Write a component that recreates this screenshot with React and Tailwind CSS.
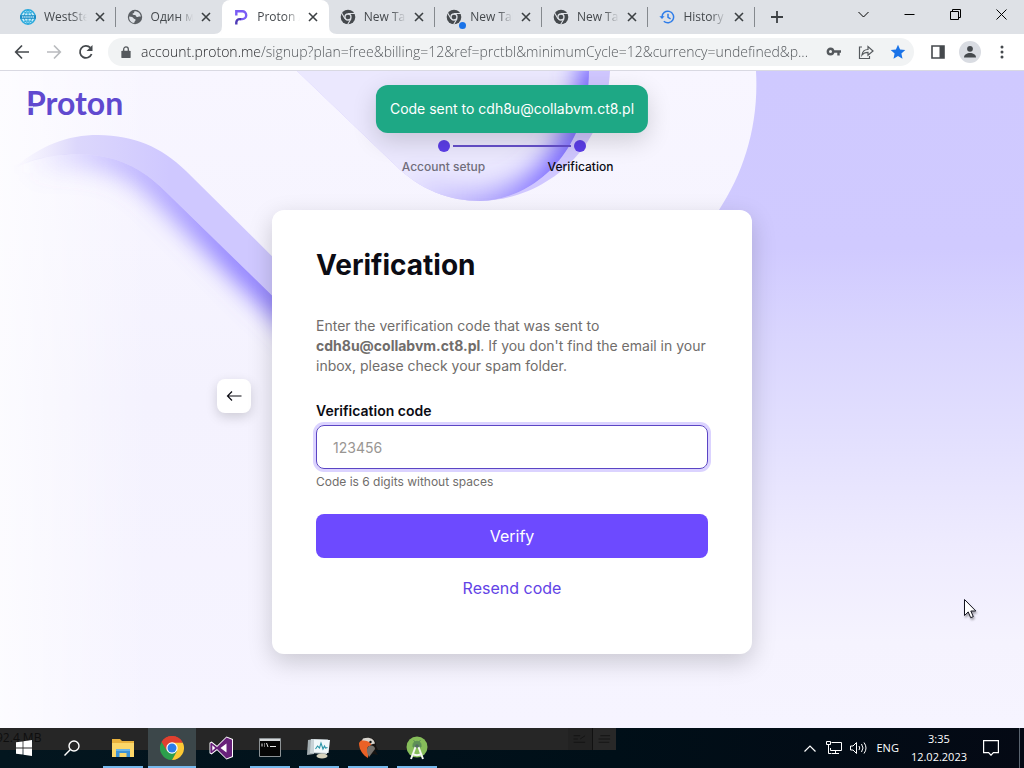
import React from 'react';
import { clsx } from 'clsx';

const tabs = [
  { title: 'WestSteel', icon: WestIcon },
  { title: 'Один мир', icon: GlobeIcon },
  { title: 'Proton Account', icon: ProtonMark, active: true },
  { title: 'New Tab', icon: ChromeMono },
  { title: 'New Tab', icon: ChromeMono, dot: true },
  { title: 'New Tab', icon: ChromeMono },
  { title: 'History', icon: HistoryIcon },
];

const steps = [
  { label: 'Account setup', color: 'text-[#706d7b]' },
  { label: 'Verification', color: 'text-[#0c0c14]' },
];

const apps = [
  { name: 'File Explorer', icon: FolderIcon, open: true },
  { name: 'Chrome', icon: ChromeIcon, open: true, active: true },
  { name: 'Visual Studio', icon: VisualStudioIcon },
  { name: 'Command Prompt', icon: TerminalIcon, open: true },
  { name: 'Resource Monitor', icon: MonitorIcon, open: true },
  { name: 'JetBrains', icon: BirdIcon, open: true },
  { name: 'Android Studio', icon: AndroidStudioIcon, open: true },
];

function WestIcon() {
  return (
    <svg viewBox="0 0 16 16" className="h-4 w-4">
      <circle cx="8" cy="8" r="7.2" fill="#c9ecf8" stroke="#2ba9dc" strokeWidth="1.5" />
      <path d="M8 1v14M3.500 2.800c1.500 1.600 7.500 1.600 9 0M3.500 13.200c1.500-1.600 7.500-1.600 9 0M8 1c-5 3-5 11 0 14M8 1c5 3 5 11 0 14" fill="none" stroke="#2ba9dc" />
      <path d="M0 6.200h16v3.600H0z" fill="#1d8cc4" />
      <path d="M2 8h12" stroke="#b7e3f5" strokeWidth="1.300" strokeDasharray="1.500 .6" />
    </svg>
  );
}

function GlobeIcon() {
  return (
    <svg viewBox="0 0 16 16" className="h-4 w-4">
      <circle cx="8" cy="8" r="7.200" fill="#5a5e63" />
      <path d="M2.200 7.500c2.500.2 3.600.6 4.300 1.700.5.9 1.900.4 2.100 1.600.2 1.300-1.200 1.200-1.400 3.300C4 13.800 1.800 11 2.200 7.500zM7.300 2.200c.3 1.300-.3 2-1.700 2.300-.5 1.500 1 1.500 2.400 1.500 1.300.3.800 1.800 2 2.100 1.300.2 1.500-.9 3.800-.3C13.800 4.500 11 2 7.300 2.200z" fill="#dee1e6" />
    </svg>
  );
}

function ProtonMark() {
  return (
    <svg viewBox="0 0 16 16" className="h-4 w-4">
      <path d="M3.300 6.500V2.300h6a3.900 3.900 0 0 1 0 7.800H7" fill="none" stroke="#7a5cf5" strokeWidth="2.400" />
      <path d="M3.300 15.500v-2a3.400 3.400 0 0 1 3.400-3.400h1.500" fill="none" stroke="#4f3bb8" strokeWidth="2.400" />
    </svg>
  );
}

function ChromeMono() {
  return (
    <svg viewBox="0 0 16 16" className="h-4 w-4">
      <circle cx="8" cy="8" r="7.300" fill="#45494d" />
      <circle cx="8" cy="8" r="3" fill="#45494d" stroke="#dee1e6" strokeWidth="1.300" />
      <path d="M8 4.500h7M5 9.800L1.500 3.700M11 9.700l-3.500 6" stroke="#dee1e6" strokeWidth="1.100" />
    </svg>
  );
}

function HistoryIcon() {
  return (
    <svg viewBox="0 0 16 16" className="h-4 w-4" fill="none" stroke="#2f7de9" strokeWidth="1.500">
      <path d="M3 8a5.800 5.800 0 1 1 1.800 4.200" />
      <path d="M9 4.800V8.300l2.600 1.600" />
      <path d="M.4 7.300h5.200L3 10z" fill="#2f7de9" stroke="none" />
    </svg>
  );
}

function CloseIcon() {
  return (
    <svg viewBox="0 0 10 10" className="h-[10px] w-[10px]" stroke="#3c4043" strokeWidth="1.600">
      <path d="M1 1l8 8M9 1L1 9" />
    </svg>
  );
}

function TabStrip() {
  return (
    <header className="flex h-[34px] justify-between bg-[#dee1e6]">
      <div className="flex min-w-0 items-stretch pl-[9px]">
        <ul className="flex w-[746px] min-w-0">
          {tabs.map(({ title, icon: Icon, active, dot }, i) => (
            <li key={i} className={clsx('relative flex min-w-0 flex-1 items-center rounded-t-lg px-[11px]', active && 'bg-white')}>
              {active && (
                <svg viewBox="0 0 124 8" preserveAspectRatio="none" className="absolute -left-2 bottom-0 h-2 w-[123px]" fill="#fff">
                  <path d="M0 8Q8 8 8 0V8zM124 8Q116 8 116 0V8z" />
                </svg>
              )}
              <span className="relative shrink-0">
                <Icon />
                {dot && <span className="absolute -bottom-1 -right-1 h-[7px] w-[7px] rounded-full bg-[#1a73e8]" />}
              </span>
              <span className="ml-2 mr-2 min-w-0 flex-1 overflow-hidden whitespace-nowrap text-xs text-[#45494d] [mask-image:linear-gradient(90deg,#000_65%,transparent)]">
                {title}
              </span>
              <button aria-label="Close tab" className="relative shrink-0"><CloseIcon /></button>
              {!active && i !== 1 && <span className="absolute right-0 h-5 w-px bg-[#85898e]" />}
            </li>
          ))}
        </ul>
        <button aria-label="New tab" className="flex w-11 items-center justify-center">
          <svg viewBox="0 0 12 12" className="h-3 w-3" stroke="#3c4043" strokeWidth="1.800"><path d="M6 0v12M0 6h12" /></svg>
        </button>
      </div>
      <div className="flex h-7 text-black">
        <button aria-label="Search tabs" className="flex w-[46px] items-center justify-center">
          <svg viewBox="0 0 11 11" className="h-[11px] w-[11px]" fill="none" stroke="currentColor"><path d="M.5 3l5 5 5-5" /></svg>
        </button>
        <button aria-label="Minimize" className="flex w-[46px] items-center justify-center">
          <svg viewBox="0 0 11 11" className="h-[11px] w-[11px]" stroke="currentColor"><path d="M.5 5.500h10" /></svg>
        </button>
        <button aria-label="Restore" className="flex w-[46px] items-center justify-center">
          <svg viewBox="0 0 11 11" className="h-[11px] w-[11px]" fill="none" stroke="currentColor"><path d="M.5 2.500h8v8h-8zM2.500 2.500v-2h8v8h-2" /></svg>
        </button>
        <button aria-label="Close" className="flex w-[46px] items-center justify-center">
          <svg viewBox="0 0 11 11" className="h-[11px] w-[11px]" stroke="currentColor"><path d="M.5.5l10 10M10.500.5l-10 10" /></svg>
        </button>
      </div>
    </header>
  );
}

function ToolButton({ label, children }) {
  return (
    <button aria-label={label} className="flex h-7 w-7 shrink-0 items-center justify-center">
      {children}
    </button>
  );
}

function Toolbar() {
  return (
    <div className="flex h-[37px] items-center gap-1 border-b border-[#d9d9e2] bg-white px-2">
      <ToolButton label="Back">
        <svg viewBox="0 0 16 16" className="h-4 w-4" fill="none" stroke="#45494d" strokeWidth="1.700"><path d="M15 8H2M8 1.500L1.700 8 8 14.500" /></svg>
      </ToolButton>
      <ToolButton label="Forward">
        <svg viewBox="0 0 16 16" className="h-4 w-4" fill="none" stroke="#b9bbbe" strokeWidth="1.700"><path d="M1 8h13M8 1.500L14.300 8 8 14.500" /></svg>
      </ToolButton>
      <ToolButton label="Reload">
        <svg viewBox="0 0 16 16" className="h-4 w-4" fill="none" stroke="#45494d" strokeWidth="1.800">
          <path d="M13.600 10a6 6 0 1 1-1.300-6.300" />
          <path d="M14.500 1v6h-6z" fill="#45494d" stroke="none" />
        </svg>
      </ToolButton>
      <div className="ml-1 mr-[6px] flex h-7 min-w-0 flex-1 items-center gap-1 rounded-full bg-[#f1f3f4] pr-[2px]">
        <svg viewBox="0 0 10 14" className="ml-[13px] h-[13px] w-[10px] shrink-0">
          <path d="M2.500 6V3.500a2.500 2.500 0 0 1 5 0V6" fill="none" stroke="#55595d" strokeWidth="1.400" />
          <rect y="5" width="10" height="8" rx="1" fill="#55595d" />
        </svg>
        <input
          aria-label="Address"
          readOnly
          value="account.proton.me/signup?plan=free&billing=12&ref=prctbl&minimumCycle=12&currency=undefined&p..."
          className="ml-[6px] min-w-0 flex-1 bg-[linear-gradient(90deg,#202124_118px,#4f5357_118px)] bg-clip-text text-sm font-light text-transparent outline-none"
        />
        <ToolButton label="Passwords">
          <svg viewBox="0 0 16 16" className="h-4 w-4" fill="none" stroke="#55595d">
            <circle cx="4.500" cy="7.500" r="2.700" strokeWidth="2.400" />
            <path d="M7.500 7.500H15M12.500 7.500v4" strokeWidth="2.400" />
          </svg>
        </ToolButton>
        <ToolButton label="Share">
          <svg viewBox="0 0 16 16" className="h-4 w-4" fill="none" stroke="#55595d" strokeWidth="1.200">
            <path d="M4 3H1.500v11.500h10V12" />
            <path d="M4 11c.5-4 3-5.500 6-5.500V2.500L15 7l-5 4.200V8.300C7.500 8.300 5.500 9 4 11z" />
          </svg>
        </ToolButton>
        <ToolButton label="Bookmarked">
          <svg viewBox="0 0 16 16" className="h-4 w-4" fill="#1a73e8"><path d="M8 .8l2.100 4.800 5.200.5-3.900 3.500 1.100 5.100L8 12l-4.500 2.700 1.100-5.100L.7 6.100l5.200-.5z" /></svg>
        </ToolButton>
      </div>
      <ToolButton label="Side panel">
        <svg viewBox="0 0 14 14" className="h-[14px] w-[14px]"><path d="M1 1h12v12H1z" fill="none" stroke="#45494d" strokeWidth="1.600" /><path d="M8.500 1H13v12H8.500z" fill="#45494d" /></svg>
      </ToolButton>
      <ToolButton label="Profile">
        <svg viewBox="0 0 22 22" className="h-[22px] w-[22px]">
          <circle cx="11" cy="11" r="11" fill="#d9dce2" />
          <circle cx="11" cy="7.800" r="2.900" fill="#45494d" />
          <path d="M5 16.500c0-6 12-6 12 0z" fill="#45494d" />
        </svg>
      </ToolButton>
      <ToolButton label="Menu">
        <svg viewBox="0 0 4 14" className="h-[14px] w-1" fill="#45494d"><circle cx="2" cy="2" r="1.500" /><circle cx="2" cy="7" r="1.500" /><circle cx="2" cy="12" r="1.500" /></svg>
      </ToolButton>
    </div>
  );
}

function Backdrop() {
  return (
    <svg viewBox="0 71 1024 657" preserveAspectRatio="xMidYMin slice" className="absolute inset-0 h-full w-full" aria-hidden="true">
      <defs>
        <linearGradient id="base" x1="0" y1="0" x2="0" y2="1">
          <stop offset="0" stopColor="#f8f6ff" />
          <stop offset=".5" stopColor="#f4f2fe" />
          <stop offset="1" stopColor="#f6f4ff" />
        </linearGradient>
        <linearGradient id="glow" x1="0" x2="1">
          <stop offset="0" stopColor="#fff" stopOpacity=".7" />
          <stop offset="1" stopColor="#fff" stopOpacity="0" />
        </linearGradient>
        <linearGradient id="right" x1="0" y1="71" x2="0" y2="728" gradientUnits="userSpaceOnUse">
          <stop offset="0" stopColor="#cfc9ff" />
          <stop offset=".27" stopColor="#d0caff" />
          <stop offset=".4" stopColor="#d9d5fe" />
          <stop offset=".55" stopColor="#e2dffe" />
          <stop offset=".72" stopColor="#eeebfe" />
          <stop offset=".87" stopColor="#f5f3fe" />
          <stop offset="1" stopColor="#f6f4ff" />
        </linearGradient>
        <linearGradient id="ribbon" x1="15" x2="170" y1="0" y2="0" gradientUnits="userSpaceOnUse">
          <stop offset="0" stopColor="#e6e2fb" stopOpacity="0" />
          <stop offset=".4" stopColor="#dcd7fc" />
          <stop offset="1" stopColor="#cfc8ff" />
        </linearGradient>
        <linearGradient id="ribbonShade" x1="30" x2="240" y1="0" y2="0" gradientUnits="userSpaceOnUse">
          <stop offset="0" stopColor="#8574ff" stopOpacity="0" />
          <stop offset=".35" stopColor="#8574ff" stopOpacity=".4" />
          <stop offset="1" stopColor="#7b6aff" stopOpacity=".9" />
        </linearGradient>
        <linearGradient id="blobShade" x1="400" x2="560" y1="0" y2="0" gradientUnits="userSpaceOnUse">
          <stop offset="0" stopColor="#8574ff" stopOpacity="0" />
          <stop offset="1" stopColor="#7563ff" />
        </linearGradient>
        <clipPath id="underRibbon">
          <path d="M0 170C30 160 50 154 82 154C118 156 142 168 165 191L290 313V728H0z" />
        </clipPath>
        <clipPath id="blob">
          <path d="M297 71L395 165C420 190 450 201 480 201C535 200 589 150 589 71z" />
        </clipPath>
        <filter id="soft" x="-30%" y="-50%" width="160%" height="200%"><feGaussianBlur stdDeviation="12" /></filter>
      </defs>
      <path d="M0 71h1024v657H0z" fill="url(#base)" />
      <path d="M0 71h150v657H0z" fill="url(#glow)" />
      <path d="M756 71C759 125 744 172 719 210V728H1024V71z" fill="url(#right)" />
      <path d="M297 71L395 165C420 190 450 201 480 201C545 200 606 150 610 71z" fill="#d0c7ff" />
      <g clipPath="url(#blob)">
        <path d="M290 71h310v140H290z" fill="#ebe8fe" />
        <path d="M410 190C440 203 460 208 480 208C540 207 596 150 596 60" fill="none" stroke="url(#blobShade)" strokeWidth="34" filter="url(#soft)" />
      </g>
      <path d="M10 171C40 145 68 135 98 135C135 136 160 146 186 171L290 274V313L165 191C142 168 118 156 82 154C50 154 30 160 10 171z" fill="url(#ribbon)" />
      <g clipPath="url(#underRibbon)">
        <path d="M20 165C45 155 60 153 82 153C118 155 142 167 165 190L310 332" fill="none" stroke="url(#ribbonShade)" strokeWidth="30" filter="url(#soft)" />
      </g>
    </svg>
  );
}

function Stepper() {
  return (
    <div className="mx-auto w-[274px]">
      <div className="flex h-3 items-center gap-[3px] px-[63px]">
        <span className="h-3 w-3 rounded-full bg-[#5c3ee8]" />
        <span className="h-[2px] flex-1 bg-[#6650cc]" />
        <span className="h-3 w-3 rounded-full bg-[#5c3ee8]" />
      </div>
      <ol className="mt-[7px] grid grid-cols-2 text-center text-xs font-medium">
        {steps.map((step) => (
          <li key={step.label} className={step.color}>{step.label}</li>
        ))}
      </ol>
    </div>
  );
}

function VerificationCard() {
  return (
    <form className="rounded-xl bg-white px-11 pb-11 pt-9 shadow-[0_8px_24px_rgba(0,0,0,0.18)]">
      <h1 className="text-[28px] font-bold leading-[38px] text-[#0c0c14]">Verification</h1>
      <p className="mt-8 text-sm text-[#706d6b]">
        Enter the verification code that was sent to <b>cdh8u@collabvm.ct8.pl</b>. If you don't find the email in your inbox, please check your spam folder.
      </p>
      <label htmlFor="code" className="mt-[25px] block text-sm font-semibold text-[#0c0c14]">Verification code</label>
      <input
        id="code"
        placeholder="123456"
        className="mt-1 h-11 w-full rounded-lg border border-[#5b45c4] px-4 text-sm outline-none ring-3 ring-[#dbd3ff] placeholder:text-[#999693]"
      />
      <p className="mt-[5px] text-xs text-[#706d6b]">Code is 6 digits without spaces</p>
      <button type="button" className="mt-6 h-11 w-full rounded-lg bg-[#6d4aff] text-base text-white">Verify</button>
      <button type="button" className="mt-2 h-11 w-full rounded-lg text-base text-[#6243e6]">Resend code</button>
    </form>
  );
}

function ProtonPage() {
  return (
    <main className="relative flex-1 overflow-hidden font-['Inter',sans-serif]">
      <Backdrop />
      <div className="relative">
        <div className="px-[26px] pt-3">
          <a href="#" className="relative inline-block font-['Lato',sans-serif] text-[32px] font-bold leading-10 text-[#6049cf]">
            Proton
            <svg viewBox="0 0 8 4" className="absolute left-0 top-[22px] h-1 w-2" fill="none" stroke="#f9f8ff" strokeWidth="1.500"><path d="M0 2h7" /></svg>
          </a>
        </div>
        <div className="mt-[17px]"><Stepper /></div>
        <div className="mt-[35px] grid grid-cols-[1fr_480px_1fr] gap-x-[21px]">
          <button aria-label="Back" className="mt-[169px] flex h-[34px] w-[34px] items-center justify-center justify-self-end rounded-lg bg-white shadow-[0_4px_12px_rgba(0,0,0,0.16)]">
            <svg viewBox="0 0 16 16" className="h-4 w-4" fill="none" stroke="#0c0c14" strokeWidth="1.200"><path d="M15.500 8H1.500M6 3.500L1.500 8 6 12.500" /></svg>
          </button>
          <VerificationCard />
        </div>
      </div>
      <div role="alert" className="absolute left-1/2 top-[14px] -translate-x-1/2 whitespace-nowrap rounded-xl bg-[#1ea885] p-[14px] text-sm text-white shadow-[0_8px_24px_rgba(0,0,0,0.16)]">
        Code sent to cdh8u@collabvm.ct8.pl
      </div>
      <svg viewBox="0 0 12 20" className="absolute right-[48px] top-[528px] h-5 w-3 drop-shadow-[1px_2px_1px_rgba(0,0,0,0.35)]">
        <path d="M.5.5v16l3.700-3.600 2.500 5.800 2.600-1.100-2.500-5.600h5z" fill="#fff" stroke="#14141f" />
      </svg>
    </main>
  );
}

function FolderIcon() {
  return (
    <svg viewBox="0 0 22 22" className="h-[22px] w-[22px]">
      <path d="M0 2h8l2 2h12v15H0z" fill="#e9b23d" />
      <path d="M0 6h22v14H0z" fill="#fbd769" />
      <path d="M4 12h14v8h-3.500v-4h-7v4H4z" fill="#3d93d6" />
      <path d="M4 12h14v2H4z" fill="#69b5e8" />
    </svg>
  );
}

function ChromeIcon() {
  return (
    <svg viewBox="0 0 24 24" className="h-6 w-6">
      <path d="M12 12L1.600 6A12 12 0 0 1 22.400 6z" fill="#e0402f" />
      <path d="M12 12L1.600 6A12 12 0 0 0 12 24l5.200-9z" fill="#2c9f4b" />
      <path d="M12 6.500h10.700A12 12 0 0 1 12 24l5-9z" fill="#fcc934" />
      <path d="M1.600 6L7 15l5-8.500h10.600L22.400 6A12 12 0 0 0 1.600 6z" fill="#e0402f" />
      <circle cx="12" cy="12" r="5.700" fill="#fff" />
      <circle cx="12" cy="12" r="4.500" fill="#2b7de9" />
    </svg>
  );
}

function VisualStudioIcon() {
  return (
    <svg viewBox="0 0 24 24" className="h-6 w-6">
      <path d="M17.500.5L24 3v18l-6.500 2.500L8 14.300 2.600 18.500.5 17.300V6.700l2.100-1.200L8 9.700z" fill="#fff" />
      <path d="M17.500 1.500l5.500 2.300v16.400l-5.500 2.300L8 13l-5.500 4.300-1.200-.7V7.400l1.200-.7L8 11z" fill="#68217a" />
      <path d="M17.500 7.500v9L11.500 12zM3.300 9.300v5.400L6.200 12z" fill="#fff" />
    </svg>
  );
}

function TerminalIcon() {
  return (
    <svg viewBox="0 0 22 20" className="h-5 w-[22px]">
      <path d="M.5.500h21v18H.5z" fill="#050505" stroke="#8d9396" />
      <path d="M1 1h20v2H1z" fill="#d5d8da" />
      <path d="M3 5.500v3M5.500 5.500v1M5.500 7.500v1M7.500 5l1.500 4M11 8.500h6" stroke="#e6e6e6" />
    </svg>
  );
}

function MonitorIcon() {
  return (
    <svg viewBox="0 0 24 24" className="h-6 w-6">
      <path d="M1 4l6-1v15l-7 1z" fill="#a3adb1" />
      <path d="M4 3l17 .5-1 14.500-17-1z" fill="#c9d3d7" />
      <path d="M7 3.500l16 .5-1.500 13L7 16z" fill="#f1f8fa" />
      <path d="M8.500 13l2-3 2 2 1.500-5 2 6 1.500-3 1 2 2-.5" fill="none" stroke="#2d96a8" strokeWidth="1.100" />
      <ellipse cx="15" cy="20" rx="5.500" ry="2.500" fill="#d5d2bd" />
    </svg>
  );
}

function BirdIcon() {
  return (
    <svg viewBox="0 0 24 24" className="h-6 w-6">
      <path d="M9 2c7-2 12 3 11 8l2 4-3 0 3 5-5-1-6 5-5-6-3-7 2-5z" fill="#171412" />
      <path d="M3 7c2-4 8-5 12-3 2 2 1 4-1 6-3 0-3 3-2 6l0 6c-5-3-9-8-9-15z" fill="#ea6126" />
      <path d="M7 2.500c6-2 11 0 12 5l-4 1c-1-3-4-4-9-4z" fill="#d9d5ce" />
      <path d="M12 11c3-3 7-1 7 2l-6 8c-2-4-3-7-1-10z" fill="#76726d" />
      <circle cx="14.500" cy="6" r="1.200" fill="#111" />
    </svg>
  );
}

function AndroidStudioIcon() {
  return (
    <svg viewBox="0 0 24 24" className="h-6 w-6">
      <circle cx="12" cy="11" r="10.500" fill="#86bd5a" />
      <path d="M8 9c0-5 8-5 8 0v2H8zM8.500 4l1.500 2M15.500 4L14 6" fill="#5d8f56" stroke="#5d8f56" />
      <path d="M10.500 11L6 23M13.500 11L18 23M7 17.500c3 2 7 2 10 0" fill="none" stroke="#f4f7f2" strokeWidth="2" />
      <circle cx="12" cy="10" r="1.800" fill="#566b66" />
    </svg>
  );
}

function Taskbar() {
  return (
    <footer className="relative flex h-10 items-stretch justify-between overflow-hidden bg-[linear-gradient(90deg,#03161f,#000f18_60%,#040914)] text-[11px] text-white">
      <div className="absolute left-0 top-0 h-[22px] w-[616px] bg-[#262626]">
        <span className="absolute -left-1 top-[2px] text-xs text-[#0e0e0e]">92.4 MB</span>
        <span className="absolute right-0 top-0 flex h-full w-12 gap-px bg-[#111]">
          <svg viewBox="0 0 23 22" className="h-full flex-1 bg-[#222] p-[2px]" stroke="#111"><path d="M4 7h8M4 11h5M12 11l6-4M4 15h14" /></svg>
          <svg viewBox="0 0 23 22" className="h-full flex-1 bg-[#282828] p-[2px]" stroke="#111"><path d="M6 7h12M4 11h14M4 15h13" /></svg>
        </span>
      </div>
      <div className="relative flex">
        <button aria-label="Start" className="flex w-12 items-center justify-center">
          <svg viewBox="0 0 16 16" className="h-4 w-4" fill="#fff"><path d="M0 2.300l6.600-.9v6.200H0zM7.400 1.300L16 0v7.600H7.400zM0 8.400h6.600v6.200L0 13.700zM7.400 8.400H16V16l-8.600-1.300z" /></svg>
        </button>
        <button aria-label="Search" className="flex w-12 items-center justify-center">
          <svg viewBox="0 0 16 16" className="h-4 w-4" fill="none" stroke="#fff" strokeWidth="1.400"><circle cx="10" cy="6" r="5" /><path d="M6.400 9.600L.5 15.500" /></svg>
        </button>
        <div className="ml-[3px] flex gap-px">
          {apps.map(({ name, icon: Icon, open, active }) => (
            <button key={name} aria-label={name} className={clsx('relative flex w-12 items-center justify-center', active && 'bg-[#3c474a]')}>
              <Icon />
              {open && <span className={clsx('absolute bottom-0 h-[2px] bg-[#76b9ed]', active ? 'w-12' : 'w-10')} />}
            </button>
          ))}
        </div>
      </div>
      <div className="flex items-center">
        <button aria-label="Show hidden icons" className="flex w-6 justify-center">
          <svg viewBox="0 0 12 7" className="h-[7px] w-3" fill="none" stroke="#fff" strokeWidth="1.200"><path d="M.5 6.500L6 1l5.500 5.500" /></svg>
        </button>
        <button aria-label="Network" className="flex w-6 justify-center">
          <svg viewBox="0 0 16 14" className="h-[14px] w-4" fill="none" stroke="#fff"><path d="M5.500 1.500h10v8H4.500V7M9.500 9.500v3M6 12.500h7M.5.500h4v3h-4zM2.500 3.500v9h3" /></svg>
        </button>
        <button aria-label="Volume" className="flex w-6 justify-center">
          <svg viewBox="0 0 17 14" className="h-[14px] w-[17px]" fill="none" stroke="#fff"><path d="M.5 5h2.500L6.500 1.500v11L3 9H.5zM9 5q1.500 2 0 4M11.500 3q3 4 0 8M14 1.500q4 5.500 0 11" /></svg>
        </button>
        <span className="ml-[6px]">ENG</span>
        <div className="ml-3 text-center leading-[18px]">
          <div>3:35</div>
          <div>12.02.2023</div>
        </div>
        <button aria-label="Notifications" className="ml-4 mr-5">
          <svg viewBox="0 0 16 16" className="h-4 w-4" fill="none" stroke="#fff" strokeWidth="1.200"><path d="M.6.600h14.800v12h-5L8 15.200 5.600 12.600h-5z" /></svg>
        </button>
        <span className="mr-1 h-10 w-px bg-[#5a6470]" />
      </div>
    </footer>
  );
}

export default function App() {
  return (
    <div className="flex min-h-screen flex-col font-['Open_Sans',sans-serif]">
      <TabStrip />
      <Toolbar />
      <ProtonPage />
      <Taskbar />
    </div>
  );
}
